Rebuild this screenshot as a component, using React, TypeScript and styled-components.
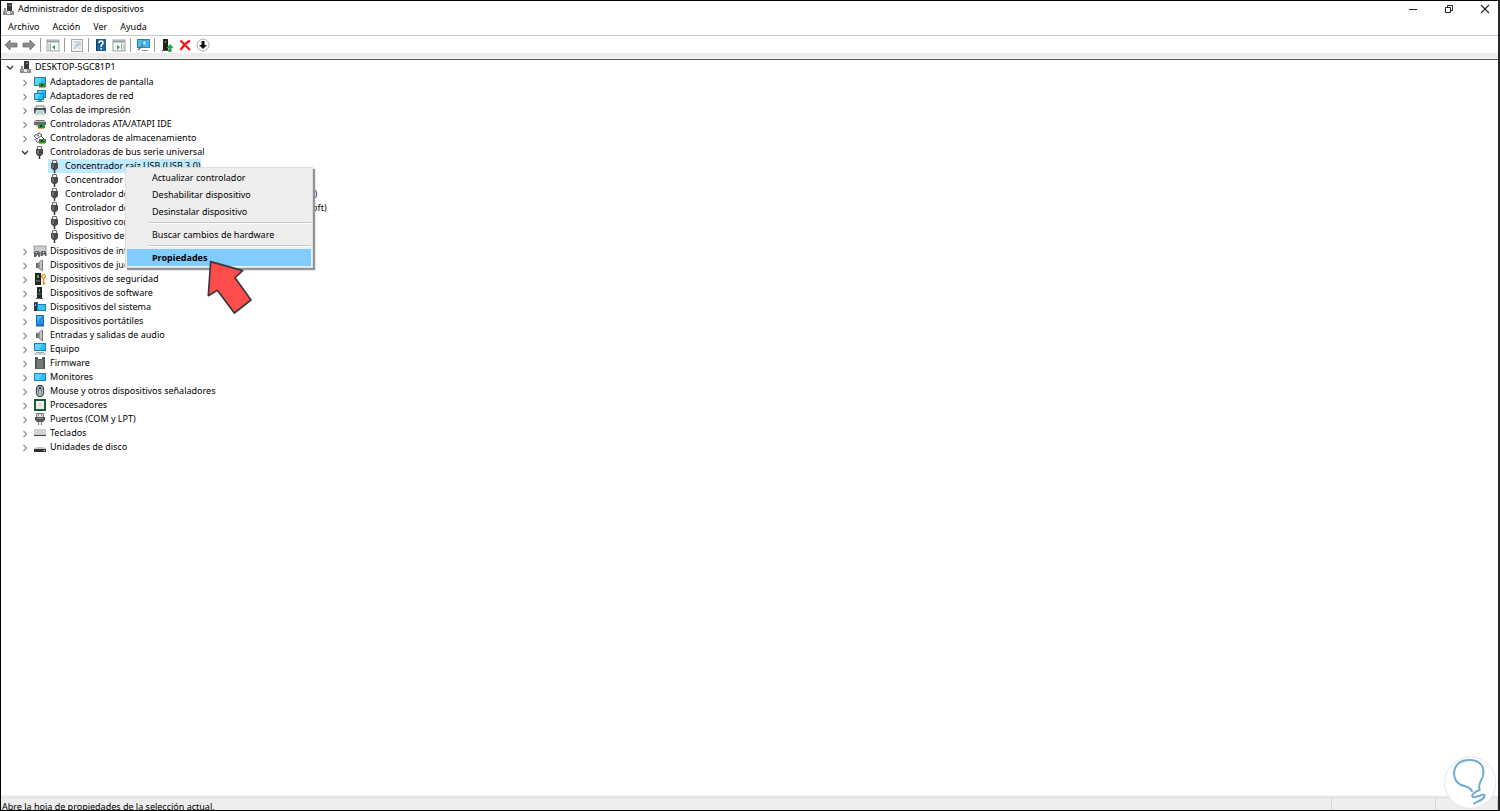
import React from "react";
import styled, { createGlobalStyle, css } from "styled-components";

const GlobalStyle = createGlobalStyle`
  * { box-sizing: border-box; }
  body {
    margin: 0;
    background: #fff;
    color: #000;
    font-family: "Noto Sans", "Open Sans", sans-serif;
    font-size: 9px;
    line-height: 14px;
  }
  button { font: inherit; color: inherit; background: none; border: 0; padding: 0; margin: 0; }
  ul { list-style: none; margin: 0; padding: 0; }
  svg { display: block; flex: none; }
`;

const Window = styled.div`
  display: flex;
  flex-direction: column;
  height: 100vh;
  overflow: hidden;
  position: relative;
  border: 1px solid #000;
  border-right: 2px solid #26262a;
`;

const TitleBar = styled.header`
  display: flex;
  align-items: center;
  height: 16px;
`;
const Title = styled.h1`
  flex: 1;
  margin: 0 0 0 3px;
  font-size: 9px;
  font-weight: 400;
`;
const Controls = styled.div`
  display: flex;
  gap: 12px;
  padding-right: 1px;
`;
const ControlButton = styled.button`
  display: grid;
  place-items: center;
  width: 24px;
  height: 14px;
`;

const MenuBar = styled.nav`
  display: flex;
  align-items: center;
  gap: 13px;
  height: 18px;
  padding: 2px 0 0 7px;
`;

const Toolbar = styled.div`
  display: flex;
  align-items: center;
  height: 18px;
  padding-left: 1px;
  border-top: 1px solid #c9c9d1;
`;
const ToolButton = styled.button`
  display: grid;
  place-items: center;
  width: 18px;
  height: 16px;
`;
const ToolDivider = styled.span`
  width: 1px;
  height: 14px;
  margin: 0 3px 0 2px;
  background: #9a9a9a;
`;
const Band = styled.div`
  height: 6px;
  background: #ececec;
  border-bottom: 1px solid #fafafa;
`;

const Content = styled.main`
  flex: 1;
  min-height: 0;
  position: relative;
  border-top: 1px solid #555559;
`;

const Tree = styled.ul`
  padding-left: 3px;
`;
const Branch = styled.ul<{ $root?: boolean }>`
  padding-left: 15px;
  ${(p) => (p.$root ? css`padding-top: 1px;` : css`padding-bottom: 1px;`)}
`;
const Row = styled.div`
  display: flex;
  align-items: center;
  gap: 2px;
  height: 14px;
`;
const Toggle = styled.span`
  display: grid;
  place-items: center;
  width: 12px;
  height: 14px;
  padding-top: 2px;
`;
const Entry = styled.span<{ $selected?: boolean }>`
  display: flex;
  align-items: center;
  gap: 3px;
  height: 14px;
  white-space: nowrap;
  background: ${(p) => (p.$selected ? "#bfeaff" : "transparent")};
`;

const ContextMenu = styled.div`
  position: absolute;
  left: 124px;
  top: 107px;
  width: 188px;
  padding: 1px;
  background: #eeeeee;
  border: 1px solid #dcdcdc;
  box-shadow: 2px 2px 1px #8f949c;
`;
const MenuItem = styled.button<{ $active?: boolean }>`
  display: block;
  width: 100%;
  height: 17px;
  padding-left: 25px;
  text-align: left;
  font-weight: ${(p) => (p.$active ? 700 : 400)};
  background: ${(p) => (p.$active ? "#80ccff" : "transparent")};
`;
const MenuDivider = styled.hr`
  height: 2px;
  margin: 2px 0 2px 22px;
  border: 0;
  border-top: 1px solid #c4c4c4;
  background: #fff;
`;
const Pointer = styled.svg`
  position: absolute;
  left: 80px;
  top: 90px;
`;

const StatusBar = styled.footer`
  display: flex;
  height: 15px;
  overflow: hidden;
  background: #eeeeee;
  border-top: 1px solid #f4f4f4;
`;
const StatusText = styled.p<{ $width?: number }>`
  ${(p) => (p.$width ? `width: ${p.$width}px;` : "flex: 1;")}
  margin: 1px 0 0;
  padding: 2px 0 0 1px;
  border-top: 1px solid #dcdcdc;
  border-right: 1px solid #d6d6d6;
`;
const Badge = styled.svg`
  position: absolute;
  right: 1px;
  bottom: 1px;
`;

const Icon = ({ children }: { children: React.ReactNode }) => (
  <svg width="14" height="14" viewBox="0 0 14 14" aria-hidden="true">
    {children}
  </svg>
);

const Screen = ({ x = 1, y = 2, w = 12, h = 8 }) => (
  <>
    <rect x={x} y={y} width={w} height={h} fill="#1a7fb8" />
    <rect x={x + 1} y={y + 1} width={w - 2} height={h - 2} fill="#27bdfb" />
    <path d={`M${x + 1} ${y + 1}h${w - 5}l-3 ${h - 2}h-${w - 8}z`} fill="#5fd3ff" />
  </>
);
const Chip = ({ x = 6, y = 8 }) => (
  <>
    <rect x={x} y={y} width="7" height="4" fill="#2f8f45" />
    <rect x={x + 2} y={y + 1} width="2" height="2" fill="#123d1c" />
    <path d={`M${x} ${y + 4.5}h6`} stroke="#d8a832" />
  </>
);

const icons: Record<string, React.ReactNode> = {
  computer: (
    <>
      <rect x="6" y="1" width="5" height="8" fill="#3b3b3b" />
      <rect x="8" y="3" width="2" height="1" fill="#4fbf6c" />
      <rect x="3" y="6" width="2" height="3" fill="#8d8d8d" />
      <path d="M2 9h11v4H2z" fill="#8c8c8c" />
      <path d="M4 10h1v1H4zM10 10h1v1h-1zM6 9h3v3H6z" fill="#e6e6e6" />
    </>
  ),
  display: (<><Screen h={9} /><Chip /></>),
  network: (
    <>
      <Screen x={4} y={1} w={9} h={8} />
      <Screen x={1} y={4} w={10} h={7} />
      <path d="M3 12.5h8" stroke="#8ea39a" />
      <rect x="5" y="11" width="4" height="2" fill="#3da65a" />
    </>
  ),
  printer: (
    <>
      <path d="M3 3h8v3H3z" fill="#fafafa" stroke="#6b7278" />
      <path d="M1 5h12v5H1z" fill="#42474c" />
      <path d="M3 7h8l1 4H2z" fill="#f3f6f7" stroke="#7d858b" strokeWidth=".6" />
      <path d="M4 9h6" stroke="#54b5c8" />
    </>
  ),
  ide: (
    <>
      <path d="M1 5l2-2h8l2 2v3H1z" fill="#666b6f" />
      <path d="M2 4.5h10" stroke="#bdbdbd" />
      <path d="M3 9h3v3" fill="none" stroke="#8a8a8a" />
      <Chip x={5} y={7} />
    </>
  ),
  storage: (
    <>
      <path d="M1 5l5-3 3 2-5 4z" fill="#f4f4f4" stroke="#55595c" />
      <circle cx="5" cy="4.5" r="1" fill="#777" />
      <path d="M2 8l2 3h3" fill="none" stroke="#55595c" />
      <path d="M8 5l3 3" stroke="#444" />
      <Chip />
    </>
  ),
  usb: (
    <>
      <path d="M4.5 1.5h4v3h-4z" fill="#efefef" stroke="#6c6c6c" />
      <path d="M3 4h7v5l-2 2H5L3 9z" fill="#4a4a4a" />
      <path d="M5 5v4" stroke="#929292" />
      <path d="M6.5 11v3" stroke="#333" strokeWidth="1.5" />
    </>
  ),
  hid: (
    <>
      <rect x="1" y="2" width="12" height="7" fill="#c9ced2" stroke="#8b9297" strokeWidth=".8" />
      <path d="M1 13V9.5q0-2.5 2-2.5h2q2 0 2 2.5V13H5.5l-1-2.5L3 13zM7.500 12V9.500Q7.500 7 9 7h2.500q2 0 2 2.500V12h-1.500l-1-2-1.500 2z" fill="#5b6064" />
      <path d="M3 8.5h1M10 8.5h1" stroke="#fff" />
    </>
  ),
  speaker: (
    <>
      <path d="M3 5h3v5H3z" fill="#6a6a6a" />
      <path d="M5 5l4-4v12L5 10z" fill="#8f8f8f" />
      <path d="M7 4l2-2v10L7 10z" fill="#c4c4c4" />
      <path d="M9.5 2v11" stroke="#777" />
    </>
  ),
  security: (
    <>
      <rect x="2" y="1" width="6" height="12" fill="#232323" />
      <path d="M4 3h2v3H4z" fill="#36b75b" />
      <path d="M3 9h4" stroke="#888" />
      <circle cx="10.5" cy="4.5" r="2" fill="#fbd18a" stroke="#e08a1e" />
      <path d="M10.5 7v6M11 11h1.5" stroke="#e08a1e" strokeWidth="1.3" />
    </>
  ),
  software: (
    <>
      <rect x="4" y="1" width="5" height="11" fill="#252525" />
      <path d="M6 3h1v3H6z" fill="#3ac25f" />
      <path d="M5 8h3" stroke="#777" />
      <path d="M3 12.5h7" stroke="#5b5b5b" />
    </>
  ),
  system: (
    <>
      <path d="M1 2h4v2h3v1H1z" fill="#4c5257" />
      <rect x="1" y="3" width="3" height="8" fill="#30363b" />
      <path d="M2 4h1v2H2z" fill="#59c5e8" />
      <rect x="4" y="4" width="9" height="7" fill="#1a7fb8" />
      <rect x="5" y="5" width="7" height="5" fill="#35c3fb" />
    </>
  ),
  portable: (
    <>
      <rect x="3" y="1" width="8" height="11" fill="#2b6aa8" />
      <rect x="4" y="2" width="6" height="8" fill="#1b97ee" />
      <path d="M4 2h5l-5 6z" fill="#4cb6f7" />
      <path d="M3 12.5h8" stroke="#8fa9bd" />
    </>
  ),
  pc: (
    <>
      <Screen y={1} h={8} />
      <path d="M3 10.5h8M1 12h12" stroke="#9daab1" />
    </>
  ),
  firmware: (
    <>
      <path d="M2 1h3v2h4V1h3v12H2z" fill="#5c6260" />
      <path d="M2.5 2v10M11.5 2v10" stroke="#2e3231" strokeDasharray="1 1" />
      <path d="M4 4h6v8H4z" fill="#757c79" />
    </>
  ),
  monitor: <Screen y={3} h={8} />,
  mouse: (
    <>
      <rect x="3.5" y="1.5" width="7" height="11" rx="3.5" fill="#d5dade" stroke="#434a50" strokeWidth="1.3" />
      <path d="M7 2v5M5 4l1 7M9 4L8 11" stroke="#5b6c7a" />
      <path d="M7 3v2" stroke="#1c1c1c" strokeWidth="1.5" />
    </>
  ),
  cpu: (
    <>
      <rect x="2" y="2" width="10" height="10" fill="#eef0ee" stroke="#1d5a3c" strokeWidth="2" />
      <rect x="5" y="5" width="4" height="4" fill="#dcdcdc" />
    </>
  ),
  port: (
    <>
      <path d="M3.5 1.5h7v4h-7z" fill="#e2e2e2" stroke="#6e6e6e" />
      <path d="M5.5 2v2M8.5 2v2" stroke="#999" />
      <path d="M2 5h10v3l-2 2H4L2 8z" fill="#555" />
      <path d="M4 6.5h6" stroke="#8c8c8c" />
      <path d="M5.5 10v3M8.5 10v3" stroke="#6a6a6a" />
    </>
  ),
  keyboard: (
    <>
      <path d="M1 3h12v6H1z" fill="#d0d2d3" />
      <path d="M1 9.5h12" stroke="#4e4e4e" strokeWidth="1.2" />
    </>
  ),
  disk: (
    <>
      <path d="M3 7h8l2 2H1z" fill="#c9c9c9" />
      <rect x="1" y="9" width="12" height="3" fill="#303030" />
      <path d="M10 10.5h2" stroke="#65c67e" />
    </>
  ),
};

const Arrow = ({ flip }: { flip?: boolean }) => (
  <Icon>
    <path
      d={flip ? "M13 7L8 2v3H1v4h7v3z" : "M1 7l5-5v3h7v4H6v3z"}
      fill="#8a8a8a"
      stroke="#6f6f6f"
      strokeWidth=".8"
    />
  </Icon>
);
const Pane = ({ right }: { right?: boolean }) => (
  <>
    <rect x="1" y="2" width="12" height="11" fill="#fafafa" stroke="#9aa1a7" />
    <path d="M1 3.5h12" stroke="#9aa2a9" strokeWidth="2" />
    <path d={right ? "M9.5 5v8" : "M4.5 5v8"} stroke="#a8b0b5" />
    <path d={right ? "M10.5 7h2M10.5 9h2M10.5 11h2" : "M2 7h2M2 9h2M2 11h2"} stroke="#a6b0b7" />
    <path d={right ? "M5 7l3 2-3 3z" : "M9 7L6 9l3 3z"} fill="#2fa84f" />
  </>
);

type Tool = { label: string; icon: React.ReactNode } | null;
const tools: Tool[] = [
  { label: "Atrás", icon: <Arrow /> },
  { label: "Adelante", icon: <Arrow flip /> },
  null,
  { label: "Mostrar u ocultar árbol de consola", icon: <Icon><Pane /></Icon> },
  null,
  {
    label: "Propiedades",
    icon: (
      <Icon>
        <rect x="1.5" y="1.5" width="11" height="12" fill="#f7f7f7" stroke="#a1a7ac" />
        <path d="M3 4h3M3 7h3M3 10h3M8 10h3" stroke="#bcc2c7" />
        <path d="M6 3h5v5H6z" fill="#c6d6df" />
        <path d="M4 11l5-5" stroke="#b9c4cb" strokeWidth="1.4" />
      </Icon>
    ),
  },
  null,
  {
    label: "Ayuda",
    icon: (
      <Icon>
        <rect x="2" y="1" width="10" height="12" fill="#1f6299" />
        <path d="M2.5 1v12" stroke="#143f66" />
        <path d="M5 5q0-2 2-2t2 2q0 1-1 1.5T7.2 9" fill="none" stroke="#fff" strokeWidth="1.5" />
        <rect x="6.5" y="10" width="1.5" height="1.5" fill="#fff" />
      </Icon>
    ),
  },
  { label: "Panel de acciones", icon: <Icon><Pane right /></Icon> },
  null,
  {
    label: "Buscar cambios de hardware",
    icon: (
      <Icon>
        <rect x="1" y="1" width="13" height="9" fill="#2583b9" />
        <rect x="2" y="2" width="11" height="7" fill="#43bdec" />
        <circle cx="8.5" cy="5" r="2.5" fill="#8fdcfa" stroke="#3c7796" strokeWidth=".8" />
        <path d="M7 7l-5 5" stroke="#51738a" strokeWidth="1.4" />
        <path d="M6 12.5h6" stroke="#7fa5ba" />
      </Icon>
    ),
  },
  null,
  {
    label: "Actualizar controlador",
    icon: (
      <Icon>
        <rect x="3" y="1" width="5" height="11" fill="#222" />
        <path d="M5 3h1v2H5z" fill="#3ac25f" />
        <path d="M2 12.5h7" stroke="#444" />
        <path d="M10 6l3.5 4h-2v4h-3v-4h-2z" fill="#25a244" />
      </Icon>
    ),
  },
  {
    label: "Desinstalar dispositivo",
    icon: (
      <Icon>
        <path d="M2.5 2.5Q7 7 12 12M12 2.5Q6 6 2.5 12" fill="none" stroke="#ee1717" strokeWidth="2.2" />
      </Icon>
    ),
  },
  {
    label: "Deshabilitar dispositivo",
    icon: (
      <Icon>
        <circle cx="7" cy="7" r="6" fill="#fff" stroke="#9c9c9c" strokeWidth=".8" />
        <path d="M5.5 3h3v4h2.5L7 11 3 7h2.5z" fill="#111" />
      </Icon>
    ),
  },
];

const usbDevices = [
  "Concentrador raíz USB (USB 3.0)",
  "Concentrador raíz USB",
  "Controlador de host extensible Intel USB 3.0 -1.0 (Microsoft)",
  "Controlador de host eXtensible Intel(R) USB 3.0-1.0 (Microsoft)",
  "Dispositivo compuesto USB",
  "Dispositivo de entrada USB",
];

const categories: { label: string; icon: string; children?: string[] }[] = [
  { label: "Adaptadores de pantalla", icon: "display" },
  { label: "Adaptadores de red", icon: "network" },
  { label: "Colas de impresión", icon: "printer" },
  { label: "Controladoras ATA/ATAPI IDE", icon: "ide" },
  { label: "Controladoras de almacenamiento", icon: "storage" },
  { label: "Controladoras de bus serie universal", icon: "usb", children: usbDevices },
  { label: "Dispositivos de interfaz de usuario (HID)", icon: "hid" },
  { label: "Dispositivos de juego, sonido y vídeo", icon: "speaker" },
  { label: "Dispositivos de seguridad", icon: "security" },
  { label: "Dispositivos de software", icon: "software" },
  { label: "Dispositivos del sistema", icon: "system" },
  { label: "Dispositivos portátiles", icon: "portable" },
  { label: "Entradas y salidas de audio", icon: "speaker" },
  { label: "Equipo", icon: "pc" },
  { label: "Firmware", icon: "firmware" },
  { label: "Monitores", icon: "monitor" },
  { label: "Mouse y otros dispositivos señaladores", icon: "mouse" },
  { label: "Procesadores", icon: "cpu" },
  { label: "Puertos (COM y LPT)", icon: "port" },
  { label: "Teclados", icon: "keyboard" },
  { label: "Unidades de disco", icon: "disk" },
];

const Chevron = ({ open }: { open?: boolean }) => (
  <svg width="8" height="8" viewBox="0 0 8 8" aria-hidden="true">
    <path
      d={open ? "M1 2l3 3 3-3" : "M2.5 1l3 3-3 3"}
      fill="none"
      stroke={open ? "#333" : "#8c8c8c"}
      strokeWidth={open ? 1.4 : 1.1}
    />
  </svg>
);

type NodeProps = {
  label: string;
  icon: string;
  state?: "open" | "closed";
  selected?: boolean;
  children?: React.ReactNode;
};
const TreeNode = ({ label, icon, state, selected, children }: NodeProps) => (
  <li role="treeitem" aria-expanded={state && state === "open"} aria-selected={!!selected}>
    <Row>
      <Toggle>{state && <Chevron open={state === "open"} />}</Toggle>
      <Entry $selected={selected}>
        <Icon>{icons[icon]}</Icon>
        {label}
      </Entry>
    </Row>
    {children}
  </li>
);

export default function App() {
  return (
    <>
      <GlobalStyle />
      <Window>
        <TitleBar>
          <Icon>{icons.computer}</Icon>
          <Title>Administrador de dispositivos</Title>
          <Controls>
            <ControlButton aria-label="Minimizar">
              <svg width="10" height="10" viewBox="0 0 10 10"><path d="M1 5.5h8" stroke="#222" /></svg>
            </ControlButton>
            <ControlButton aria-label="Restaurar">
              <svg width="10" height="10" viewBox="0 0 10 10">
                <path d="M1.5 3.5h5v5h-5zM3.5 3V1.5h5v5H7" fill="none" stroke="#222" />
              </svg>
            </ControlButton>
            <ControlButton aria-label="Cerrar">
              <svg width="10" height="10" viewBox="0 0 10 10"><path d="M1 1l8 8M9 1L1 9" stroke="#222" strokeWidth="1.1" /></svg>
            </ControlButton>
          </Controls>
        </TitleBar>
        <MenuBar>
          <button>Archivo</button>
          <button>Acción</button>
          <button>Ver</button>
          <button>Ayuda</button>
        </MenuBar>
        <Toolbar role="toolbar">
          {tools.map((tool, i) =>
            tool ? (
              <ToolButton key={i} aria-label={tool.label}>{tool.icon}</ToolButton>
            ) : (
              <ToolDivider key={i} />
            )
          )}
        </Toolbar>
        <Band />
        <Content>
          <Tree role="tree">
            <TreeNode label="DESKTOP-5GC81P1" icon="computer" state="open">
              <Branch $root role="group">
                {categories.map((c) => (
                  <TreeNode key={c.label} label={c.label} icon={c.icon} state={c.children ? "open" : "closed"}>
                    {c.children && (
                      <Branch role="group">
                        {c.children.map((d, i) => (
                          <TreeNode key={d} label={d} icon="usb" selected={i === 0} />
                        ))}
                      </Branch>
                    )}
                  </TreeNode>
                ))}
              </Branch>
            </TreeNode>
          </Tree>
          <ContextMenu role="menu">
            <MenuItem role="menuitem">Actualizar controlador</MenuItem>
            <MenuItem role="menuitem">Deshabilitar dispositivo</MenuItem>
            <MenuItem role="menuitem">Desinstalar dispositivo</MenuItem>
            <MenuDivider />
            <MenuItem role="menuitem">Buscar cambios de hardware</MenuItem>
            <MenuDivider />
            <MenuItem role="menuitem" $active>Propiedades</MenuItem>
            <Pointer width="48" height="56" viewBox="0 0 144 168" aria-hidden="true">
              <path
                d="M14 11l96 27-23 21 48 67-50 39-51-68-27 16z"
                fill="#ff4747"
                fillOpacity=".97"
                stroke="#383838"
                strokeWidth="5"
                strokeLinejoin="round"
              />
            </Pointer>
          </ContextMenu>
        </Content>
        <StatusBar>
          <StatusText>Abre la hoja de propiedades de la selección actual.</StatusText>
          <StatusText $width={104} />
          <StatusText $width={62} />
        </StatusBar>
        <Badge width="53" height="53" viewBox="0 0 159 159" aria-hidden="true">
          <circle cx="79" cy="80" r="77" fill="#fff" stroke="#e2e5f2" strokeWidth="3" />
          <path
            d="M84 106C76 84 52 98 36 74C24 52 30 18 66 13C100 8 122 26 118 54C116 74 100 78 107 102C96 106 80 116 86 122C94 128 122 110 122 118C122 130 106 134 90 142"
            fill="none"
            stroke="#6fabd3"
            strokeWidth="6"
            strokeLinecap="round"
            strokeLinejoin="round"
          />
        </Badge>
      </Window>
    </>
  );
}
